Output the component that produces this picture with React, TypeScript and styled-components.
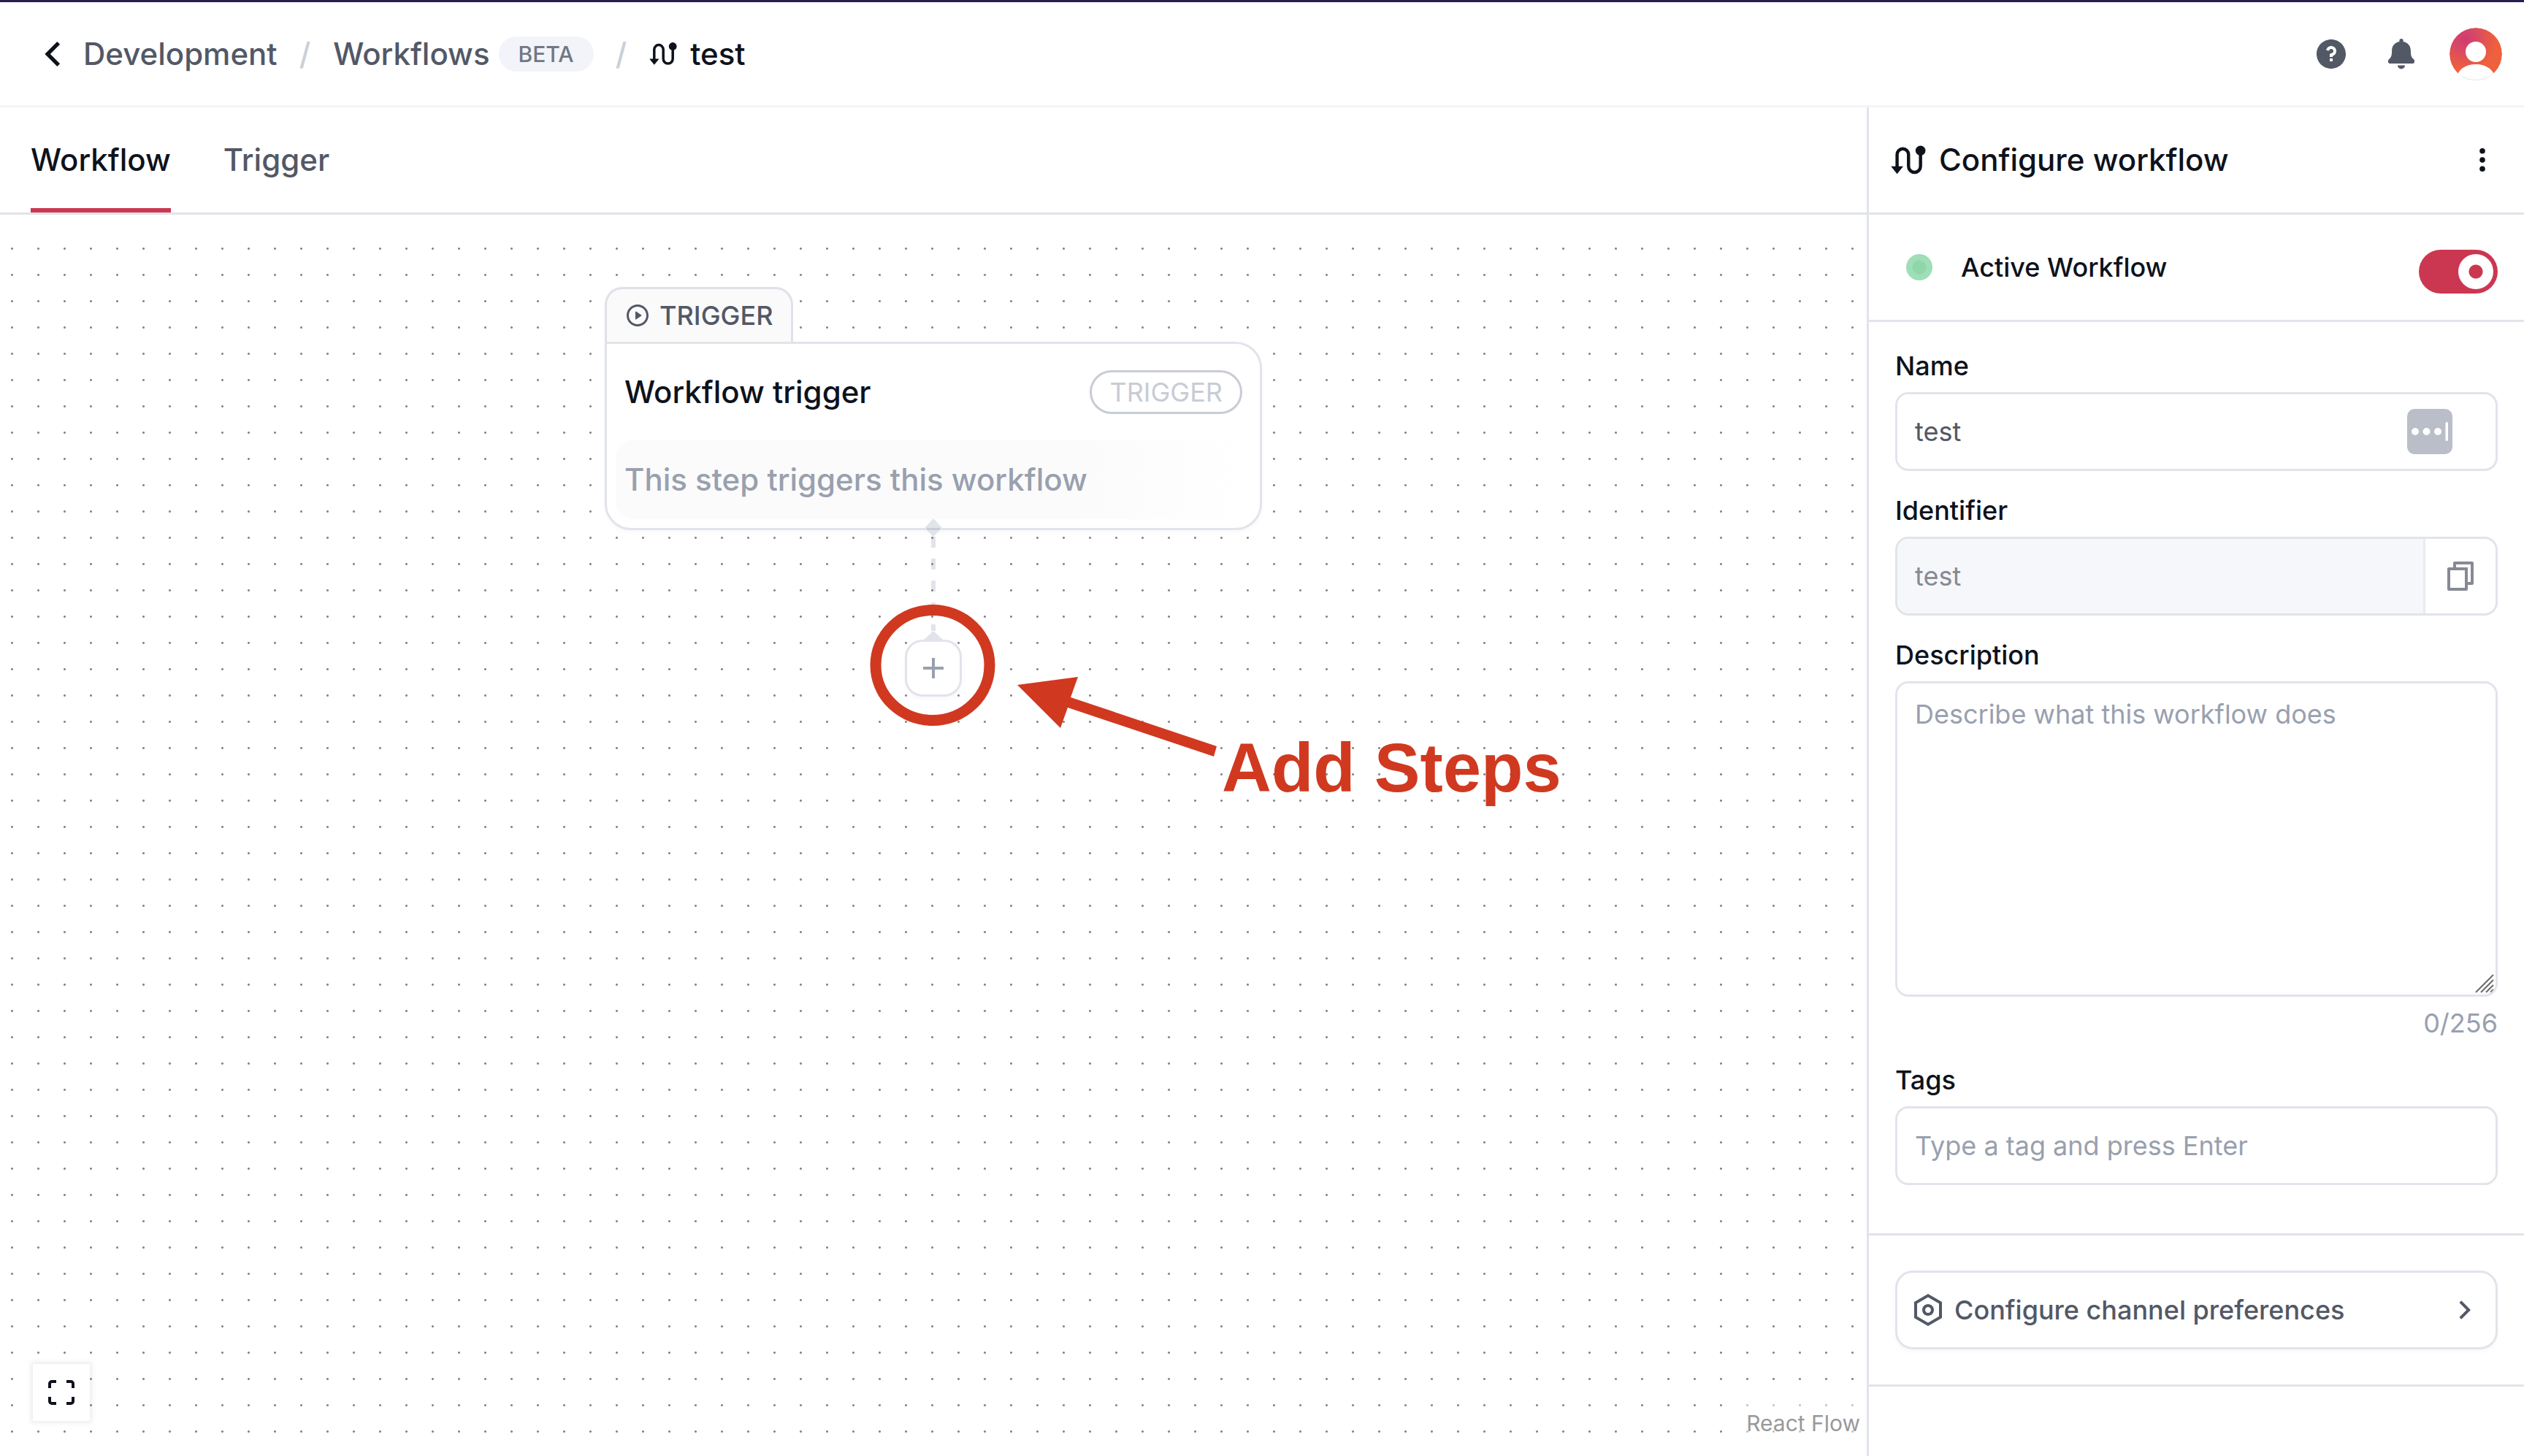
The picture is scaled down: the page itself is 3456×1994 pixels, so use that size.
import React from 'react';
import styled, { createGlobalStyle } from 'styled-components';
import {
  RiAddLine,
  RiArrowLeftSLine,
  RiArrowRightSLine,
  RiFileCopyLine,
  RiPlayCircleLine,
  RiQuestionFill,
  RiSettingsLine,
} from 'react-icons/ri';

const color = {
  strong: '#0e121b',
  sub: '#525866',
  muted: '#717784',
  soft: '#99a0ae',
  faint: '#cacfd8',
  stroke: '#e1e4ea',
  weak: '#f2f4f9',
  brand: '#cb3751',
  note: '#d03920',
};

const GlobalStyle = createGlobalStyle`
  *, *::before, *::after { box-sizing: border-box; }
  body {
    margin: 0;
    background: #fff;
    color: ${color.strong};
    font: 500 36px/48px Inter, "Liberation Sans", sans-serif;
    -webkit-font-smoothing: antialiased;
  }
  button, input, textarea { font: inherit; color: inherit; }
  svg { display: block; flex: none; }
`;

const Page = styled.div`
  min-height: 100vh;
  display: flex;
  flex-direction: column;
  border-top: 3px solid #2a1d52;
`;

const Header = styled.header`
  display: flex;
  align-items: center;
  justify-content: space-between;
  height: 144px;
  padding: 0 30px 0 40px;
  border-bottom: 3px solid ${color.weak};
`;

const Breadcrumbs = styled.nav`
  display: flex;
  align-items: center;
  font-size: 42px;
`;

const Crumb = styled.a<{ $current?: boolean }>`
  display: flex;
  align-items: center;
  gap: 18px;
  color: ${(p) => (p.$current ? color.strong : color.sub)};
  text-decoration: none;
`;

const Divider = styled.span`
  margin: 0 31px 0 30px;
  color: ${color.faint};
`;

const Badge = styled.span`
  margin-left: 12px;
  padding: 0 27px;
  border-radius: 24px;
  background: ${color.weak};
  color: ${color.muted};
  font-size: 30px;
`;

const IconButton = styled.button`
  display: flex;
  align-items: center;
  justify-content: center;
  padding: 0;
  border: 0;
  background: none;
  color: inherit;
`;

const BackButton = styled(IconButton)`
  margin-right: 10px;
`;

const HeaderActions = styled.div`
  display: flex;
  align-items: center;
  gap: 48px;
  color: ${color.sub};
`;

const AvatarButton = styled(IconButton)`
  margin-left: -6px;
`;

const Body = styled.div`
  flex: 1;
  display: grid;
  grid-template-columns: minmax(0, 1fr) 900px;
`;

const Main = styled.main`
  display: flex;
  flex-direction: column;
`;

const Tabs = styled.div`
  display: flex;
  gap: 72px;
  height: 147px;
  padding: 0 42px;
  border-bottom: 3px solid ${color.stroke};
`;

const Tab = styled.button<{ $active?: boolean }>`
  padding: 6px 0 0;
  border: 0;
  border-bottom: 6px solid ${(p) => (p.$active ? color.brand : 'transparent')};
  background: none;
  color: ${(p) => (p.$active ? color.strong : color.sub)};
  font-size: 42px;
`;

const Canvas = styled.div`
  position: relative;
  flex: 1;
  display: flex;
  flex-direction: column;
  align-items: center;
  padding-top: 99px;
  overflow: hidden;
`;

const Dots = styled.div`
  position: absolute;
  inset: 28px 0 0;
  z-index: 1;
  pointer-events: none;
  background: radial-gradient(circle at 18.5px 18.5px, #85858c 1px, transparent 2px) -2px 0 / 36px 36px;
`;

const Node = styled.article`
  position: relative;
  z-index: 2;
  width: 900px;
`;

const NodeTab = styled.div`
  display: flex;
  align-items: center;
  gap: 12px;
  width: fit-content;
  height: 75px;
  padding: 0 24px;
  border: 3px solid #e0e1e8;
  border-bottom: 0;
  border-radius: 24px 24px 0 0;
  background: #fafafa;
  color: ${color.sub};
`;

const NodeCard = styled.div`
  border: 3px solid ${color.stroke};
  border-radius: 0 36px 36px 36px;
  background: #fff;
  box-shadow: 0 3px 6px rgba(10, 13, 20, 0.03);
`;

const NodeHead = styled.div`
  display: flex;
  align-items: center;
  justify-content: space-between;
  padding: 36px 24px;
`;

const NodeTitle = styled.h2`
  margin: 0;
  font-size: 42px;
  font-weight: 500;
`;

const TypePill = styled.span`
  padding: 3px 24px;
  border: 3px solid #c8ccd3;
  border-radius: 30px;
  color: #c8ccd3;
  font-weight: 400;
  line-height: 48px;
`;

const NodeText = styled.p`
  margin: 0 12px 12px;
  padding: 30px 12px;
  border-radius: 24px;
  background: linear-gradient(90deg, #fbfbfb 70%, #fff);
  color: ${color.soft};
  font-size: 42px;
`;

const Handle = styled.svg`
  position: absolute;
  left: calc(50% - 12px);
  bottom: -9px;
`;

const AddStep = styled.button`
  position: relative;
  z-index: 2;
  display: flex;
  align-items: center;
  justify-content: center;
  width: 78px;
  height: 78px;
  padding: 0;
  border: 3px solid ${color.stroke};
  border-radius: 24px;
  background: #fff;
  color: ${color.soft};
  box-shadow: 0 3px 6px rgba(10, 13, 20, 0.03);
`;

const Callout = styled.svg`
  position: absolute;
  z-index: 3;
  left: calc(50% - 88px);
  top: 532px;
`;

const CalloutText = styled.strong`
  position: absolute;
  z-index: 3;
  left: calc(50% + 395px);
  top: 710px;
  color: ${color.note};
  font: 700 94px/96px "Liberation Sans", Arial, sans-serif;
  white-space: nowrap;
`;

const FitButton = styled.button`
  position: absolute;
  z-index: 3;
  left: 45px;
  bottom: 48px;
  display: flex;
  align-items: center;
  justify-content: center;
  width: 78px;
  height: 78px;
  padding: 0;
  border: 0;
  background: #fff;
  box-shadow: 0 0 6px 3px rgba(0, 0, 0, 0.07);
`;

const Attribution = styled.a`
  position: absolute;
  z-index: 3;
  right: 0;
  bottom: 18px;
  padding: 3px 9px;
  background: rgba(255, 255, 255, 0.5);
  color: #999;
  font-size: 30px;
  font-weight: 400;
  text-decoration: none;
`;

const Panel = styled.aside`
  border-left: 3px solid ${color.stroke};
`;

const PanelSection = styled.section`
  border-bottom: 3px solid ${color.stroke};
`;

const PanelHead = styled(PanelSection)`
  display: flex;
  align-items: center;
  height: 147px;
  padding: 0 33px 0 30px;
`;

const PanelTitle = styled.h1`
  flex: 1;
  margin: 0 0 0 18px;
  font-size: 42px;
  font-weight: 500;
`;

const ActiveRow = styled(PanelSection)`
  display: flex;
  align-items: flex-end;
  justify-content: space-between;
  padding: 36px;
`;

const ActiveLabel = styled.label`
  display: flex;
  align-items: center;
  gap: 24px;
  height: 72px;
`;

const Status = styled.span`
  width: 36px;
  height: 36px;
  margin: 0 15px;
  border-radius: 50%;
  background: radial-gradient(circle, #8fd7aa 9px, #9fdeb7 10px);
`;

const Switch = styled.input`
  appearance: none;
  display: flex;
  justify-content: flex-end;
  width: 108px;
  height: 60px;
  margin: 0;
  padding: 6px;
  border-radius: 30px;
  background: ${color.brand};

  &::before {
    content: '';
    width: 48px;
    height: 48px;
    border-radius: 50%;
    background: radial-gradient(circle, ${color.brand} 9px, #fff 10px);
  }

  &:not(:checked) {
    justify-content: flex-start;
    background: ${color.faint};
  }
`;

const Form = styled(PanelSection)`
  display: flex;
  flex-direction: column;
  gap: 30px;
  padding: 36px 36px 66px;
`;

const Field = styled.div`
  display: flex;
  flex-direction: column;
  gap: 12px;
`;

const InputBox = styled.div`
  position: relative;
  display: flex;
  align-items: center;
  border: 3px solid ${color.stroke};
  border-radius: 18px;
  overflow: hidden;
`;

const Input = styled.input`
  flex: 1;
  min-width: 0;
  height: 102px;
  padding: 0 24px;
  border: 0;
  outline: 0;
  background: #fff;
  color: ${color.sub};
  font-weight: 400;

  &::placeholder { color: ${color.soft}; }
  &:read-only { background: #f6f7fa; color: #878a94; }
`;

const AutofillButton = styled(IconButton)`
  margin-right: 59px;
`;

const CopyButton = styled(IconButton)`
  width: 99px;
  height: 102px;
  border-left: 3px solid #e8eaef;
  color: #878a94;
`;

const TextArea = styled.textarea`
  flex: 1;
  height: 426px;
  padding: 18px 24px;
  border: 0;
  outline: 0;
  resize: none;
  background: #fff;
  font-weight: 400;

  &::placeholder { color: ${color.soft}; }
`;

const Grip = styled.svg`
  position: absolute;
  right: 2px;
  bottom: 2px;
`;

const Counter = styled.output`
  color: ${color.soft};
  font-weight: 400;
  text-align: right;
`;

const LinkSection = styled(PanelSection)`
  padding: 48px 36px;
`;

const LinkButton = styled.button`
  display: flex;
  align-items: center;
  gap: 12px;
  width: 100%;
  height: 108px;
  padding: 0 18px;
  border: 3px solid ${color.stroke};
  border-radius: 24px;
  background: #fff;
  color: ${color.sub};
  box-shadow: 0 3px 6px rgba(10, 13, 20, 0.03);
`;

const LinkText = styled.span`
  flex: 1;
  text-align: left;
`;

const RouteIcon = ({ width }: { width: number }) => (
  <svg width={width} viewBox="0 0 38 34" fill="none" aria-hidden="true">
    <path
      d="M6.8 25V10.8a6.2 6.2 0 0 1 12.4 0V23.6a6.5 6.5 0 0 0 13 0V6.5"
      stroke="currentColor"
      strokeWidth="3.5"
    />
    <path d="M.2 23.6h13.3L6.8 31.8z" fill="currentColor" />
    <circle cx="32.2" cy="6.5" r="5.4" fill="currentColor" />
  </svg>
);

const BellIcon = () => (
  <svg width="48" height="48" viewBox="0 0 48 48" fill="currentColor" aria-hidden="true">
    <path d="M24 3a2.600 2.600 0 0 1 2.600 2.600v1.400C32.500 8 36.700 12.500 36.900 19c.1 7 .6 9.400 4.400 12.600.5.5.7 1 .7 1.700v1.200c0 1.400-.9 2.400-2.300 2.400H8.300C6.900 36.900 6 35.900 6 34.500v-1.200c0-.7.2-1.200.7-1.700C10.500 28.400 11 26 11.100 19c.2-6.500 4.400-11 10.300-12V5.600A2.600 2.600 0 0 1 24 3z" />
    <path d="M19 39.500h10a5 5 0 0 1-10 0z" />
  </svg>
);

const AvatarIcon = () => (
  <svg width="72" height="72" viewBox="0 0 72 72" aria-hidden="true">
    <defs>
      <radialGradient id="avatar-fill" gradientUnits="userSpaceOnUse" cx="21" cy="15" r="52">
        <stop offset="0" stopColor="#d03b6e" />
        <stop offset="0.22" stopColor="#d6446a" />
        <stop offset="0.55" stopColor="#e3544f" />
        <stop offset="0.85" stopColor="#ef603c" />
      </radialGradient>
      <clipPath id="avatar-clip">
        <circle cx="36" cy="36" r="36" />
      </clipPath>
    </defs>
    <g clipPath="url(#avatar-clip)">
      <circle cx="36" cy="36" r="36" fill="url(#avatar-fill)" />
      <circle cx="36" cy="33" r="14" fill="#fff" />
      <ellipse cx="36" cy="68" rx="25.500" ry="18" fill="#fff" />
    </g>
    <path d="M18 67a35.700 35.700 0 0 0 36 0" fill="none" stroke="#e6e6e6" />
  </svg>
);

const MoreIcon = () => (
  <svg width="48" height="48" viewBox="0 0 48 48" fill="currentColor" aria-hidden="true">
    <circle cx="24" cy="11.700" r="3.800" />
    <circle cx="24" cy="24" r="3.800" />
    <circle cx="24" cy="36.300" r="3.800" />
  </svg>
);

const FitIcon = () => (
  <svg width="36" height="34" viewBox="0 0 36 34" fill="none" stroke={color.strong} strokeWidth="4" aria-hidden="true">
    <path d="M2 11V5a3 3 0 0 1 3-3h6M25 2h6a3 3 0 0 1 3 3v6M34 23v6a3 3 0 0 1-3 3h-6M11 32H5a3 3 0 0 1-3-3v-6" />
  </svg>
);

const AutofillIcon = () => (
  <svg width="62" height="62" viewBox="0 0 62 62" fill="#fff" aria-hidden="true">
    <rect width="62" height="62" rx="10" fill="#babec9" />
    <circle cx="11" cy="31" r="5" />
    <circle cx="26.500" cy="31" r="5" />
    <circle cx="42" cy="31" r="5" />
    <rect x="52.500" y="18" width="3.500" height="26" rx="1.700" />
  </svg>
);

export default function App() {
  return (
    <>
      <GlobalStyle />
      <Page>
        <Header>
          <Breadcrumbs aria-label="Breadcrumb">
            <BackButton aria-label="Back">
              <RiArrowLeftSLine size={64} color={color.strong} />
            </BackButton>
            <Crumb href="#development">Development</Crumb>
            <Divider>/</Divider>
            <Crumb href="#workflows">Workflows</Crumb>
            <Badge>BETA</Badge>
            <Divider>/</Divider>
            <Crumb href="#test" $current>
              <RouteIcon width={38} />
              test
            </Crumb>
          </Breadcrumbs>
          <HeaderActions>
            <IconButton aria-label="Help">
              <RiQuestionFill size={48} />
            </IconButton>
            <IconButton aria-label="Notifications">
              <BellIcon />
            </IconButton>
            <AvatarButton aria-label="Account">
              <AvatarIcon />
            </AvatarButton>
          </HeaderActions>
        </Header>

        <Body>
          <Main>
            <Tabs role="tablist">
              <Tab role="tab" aria-selected="true" $active>Workflow</Tab>
              <Tab role="tab" aria-selected="false">Trigger</Tab>
            </Tabs>
            <Canvas>
              <Dots />
              <Node>
                <NodeTab>
                  <RiPlayCircleLine size={36} />
                  TRIGGER
                </NodeTab>
                <NodeCard>
                  <NodeHead>
                    <NodeTitle>Workflow trigger</NodeTitle>
                    <TypePill>TRIGGER</TypePill>
                  </NodeHead>
                  <NodeText>This step triggers this workflow</NodeText>
                </NodeCard>
                <Handle width="24" height="25" viewBox="0 0 24 25" aria-hidden="true">
                  <path d="M12 0 24 13 12 25 0 13z" fill={color.stroke} />
                  <path d="M3 13h18v3H3z" fill="#c9ccd9" />
                </Handle>
              </Node>
              <svg width="26" height="150" viewBox="0 0 26 150" aria-hidden="true">
                <path d="M13 9v129" stroke={color.stroke} strokeWidth="6" strokeDasharray="15" />
                <path d="M13 138l13 12H0z" fill={color.stroke} />
              </svg>
              <AddStep aria-label="Add step">
                <RiAddLine size={48} />
              </AddStep>
              <Callout width="480" height="220" viewBox="0 0 480 220" aria-hidden="true">
                <ellipse cx="87" cy="85" rx="78" ry="75.500" fill="none" stroke={color.note} strokeWidth="15" />
                <path d="M203 112 286 101 276 129 476 196 472 210 272 143 262 171z" fill={color.note} />
              </Callout>
              <CalloutText>Add Steps</CalloutText>
              <FitButton aria-label="Fit view">
                <FitIcon />
              </FitButton>
              <Attribution href="#react-flow">React Flow</Attribution>
            </Canvas>
          </Main>

          <Panel>
            <PanelHead>
              <RouteIcon width={48} />
              <PanelTitle>Configure workflow</PanelTitle>
              <IconButton aria-label="More actions">
                <MoreIcon />
              </IconButton>
            </PanelHead>
            <ActiveRow>
              <ActiveLabel htmlFor="active">
                <Status />
                Active Workflow
              </ActiveLabel>
              <Switch id="active" type="checkbox" role="switch" defaultChecked />
            </ActiveRow>
            <Form>
              <Field>
                <label htmlFor="name">Name</label>
                <InputBox>
                  <Input id="name" defaultValue="test" />
                  <AutofillButton aria-label="Autofill">
                    <AutofillIcon />
                  </AutofillButton>
                </InputBox>
              </Field>
              <Field>
                <label htmlFor="identifier">Identifier</label>
                <InputBox>
                  <Input id="identifier" value="test" readOnly />
                  <CopyButton aria-label="Copy identifier">
                    <RiFileCopyLine size={48} />
                  </CopyButton>
                </InputBox>
              </Field>
              <Field>
                <label htmlFor="description">Description</label>
                <InputBox>
                  <TextArea id="description" placeholder="Describe what this workflow does" />
                  <Grip width="26" height="26" viewBox="0 0 26 26" stroke="#6b6b6b" strokeWidth="2" aria-hidden="true">
                    <path d="M1 25 25 1M8 25 25 8M15 25 25 15M21 25l4-4" />
                  </Grip>
                </InputBox>
                <Counter htmlFor="description">0/256</Counter>
              </Field>
              <Field>
                <label htmlFor="tags">Tags</label>
                <InputBox>
                  <Input id="tags" placeholder="Type a tag and press Enter" />
                </InputBox>
              </Field>
            </Form>
            <LinkSection>
              <LinkButton>
                <RiSettingsLine size={48} />
                <LinkText>Configure channel preferences</LinkText>
                <RiArrowRightSLine size={48} />
              </LinkButton>
            </LinkSection>
          </Panel>
        </Body>
      </Page>
    </>
  );
}
